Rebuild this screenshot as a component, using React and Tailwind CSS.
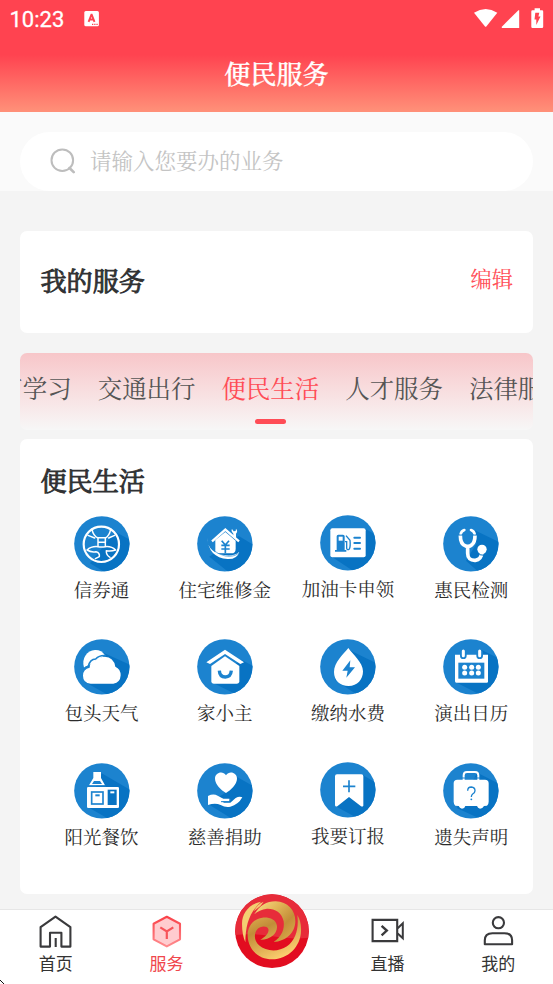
import React from "react";

const serif = "font-['Noto_Serif_CJK_SC','Noto_Serif_SC','Noto_Sans_CJK_SC',serif]";
const sans = "font-['Noto_Sans_CJK_SC',sans-serif]";

const BLUE = "#1c83cf";
const DARK = "#0873c3";

// Round service badge; x/y is the top-left corner of the artwork's drawing space.
function Badge({ id, x, y, shade, children }) {
  return (
    <svg className="block h-14 w-14" viewBox={`${x} ${y} 168 168`} fill="none">
      <defs>
        <clipPath id={id}>
          <circle cx={x + 83.5} cy={y + 83.5} r="83" />
        </clipPath>
      </defs>
      <circle cx={x + 83.5} cy={y + 83.5} r="83" fill={BLUE} />
      <path d={shade} fill={DARK} clipPath={`url(#${id})`} />
      {children}
    </svg>
  );
}

const Voucher = () => (
  <Badge id="b1" x={222} y={228} shade="M345 275L400 305V400H320L270 370Z">
    <circle cx="304" cy="313" r="53" stroke="#fff" strokeWidth="6.5" />
    <g stroke="#fff" strokeWidth="4.5" strokeLinecap="round" strokeLinejoin="round">
      <path d="M276 268Q280 288 294 294V318M332 268Q328 288 316 294V318M294 293H316M294 307H316M264 286L284 294M344 286L326 294" />
      <path d="M261 330Q274 318 294 320Q304 322 316 320Q334 318 347 330Q334 334 319 332Q318 346 330 352M261 330Q274 338 288 335Q300 338 298 350L286 356" />
    </g>
  </Badge>
);

const Repair = () => (
  <Badge id="b2" x={591} y={228} shade="M716 288L770 320V400H690L628 350Z">
    <path d="M646 300L676 276L707 302V326Q707 340 694 340H646Z" fill="#fff" />
    <path d="M636 304L676 269L717 304" stroke="#fff" strokeWidth="7" />
    <path d="M700 289V281Q692 273 696 267L701 274L707 273L708 266Q715 273 708 281V295" fill="#fff" />
    <path d="M622 293Q622 340 680 346Q705 348 718 335Q712 358 683 357Q625 352 622 293Z" fill="#fff" />
    <path d="M627 306Q634 338 676 348Q700 352 716 340" stroke={BLUE} strokeWidth="1.8" />
    <path d="M665 302L676 315L687 302M664 316H689M664 327H689M676 314V340" stroke={BLUE} strokeWidth="5" />
  </Badge>
);

const FuelCard = () => (
  <Badge id="b3" x={121} y={226} shade="M254 266L300 292V400H230L154 350Z">
    <rect x="152" y="266" width="106" height="87" rx="6" fill="#fff" />
    <path d="M171 331V290Q171 285 176 285H190Q195 285 195 290V331H200V336H166V331Z" fill={BLUE} />
    <rect x="177" y="291" width="12" height="12" fill="#fff" />
    <path d="M196 306H201V326Q203 333 209 328Q213 320 211 302L199 288" stroke={BLUE} strokeWidth="4" />
    <path d="M224 294H241M224 310H241M224 327H241" stroke={BLUE} strokeWidth="6" strokeLinecap="round" />
  </Badge>
);

const Stethoscope = () => (
  <Badge id="b4" x={489} y={228} shade="M578 268L670 312V400H600L558 362L590 310Z">
    <path d="M541 286Q541 314 557 318Q568 322 576 314Q585 307 585 286M563 318V340Q563 362 586 361Q604 359 606 336" stroke="#fff" strokeWidth="11" />
    <path d="M542 282Q544 273 553 270M584 282Q582 273 573 270" stroke="#fff" strokeWidth="8" strokeLinecap="round" />
    <path d="M534 285H548M578 285H592" stroke={BLUE} strokeWidth="2.5" />
    <circle cx="606" cy="328" r="14" fill="#fff" />
    <path d="M598 344L614 346" stroke={DARK} strokeWidth="3" />
  </Badge>
);

const Weather = () => (
  <Badge id="b5" x={72} y={43} shade="M160 84L250 125V220H190L105 172Z">
    <path d="M102 129Q96 108 106 93Q117 77 135 76Q154 75 165 92Z" fill="#fff" />
    <path d="M122 177Q99 175 99 153Q99 133 119 129Q120 109 138 107Q148 96 164 96Q191 97 196 126Q212 133 212 152Q211 174 190 177Z" fill="#fff" />
    <path d="M101 134Q107 126 115 125Q120 103 137 103Q150 90 168 93" stroke={BLUE} strokeWidth="5" />
  </Badge>
);

const Home = () => (
  <Badge id="b6" x={441} y={43} shade="M574 105L620 130V215H570L484 172Z">
    <path d="M469 113L525 75L582 113L571 118L525 88L480 118Z" fill="#fff" />
    <path d="M484 124L525 95L568 124V170Q568 177 560 177H492Q484 177 484 170Z" fill="#fff" />
    <path d="M508 138Q509 157 526 157Q542 157 544 138" stroke={BLUE} strokeWidth="10" />
  </Badge>
);

const WaterDrop = () => (
  <Badge id="b7" x={60} y={42} shade="M148 75L240 120V215H180L105 165Z">
    <path d="M145 69C130 88 102 112 102 141C102 167 120 183 146 183C172 183 189 164 189 139C189 112 158 88 145 69Z" fill="#fff" />
    <path d="M151 106L127 137H143L139 158L165 127H149Z" fill={BLUE} />
  </Badge>
);

const Calendar = () => (
  <Badge id="b8" x={429} y={43} shade="M545 76L610 108V215H550L466 172Z">
    <path d="M465 90H564V171Q564 174 560 174H469Q465 174 465 170Z" fill="#fff" />
    <rect x="475" y="114" width="78" height="48" fill={BLUE} />
    <path d="M490 86V93M539 86V93" stroke={BLUE} strokeWidth="20" strokeLinecap="round" />
    <path d="M490 79V93M539 79V93" stroke="#fff" strokeWidth="9" strokeLinecap="round" />
    {[494, 515, 535].map((cx) => (
      <g key={cx} fill="#fff">
        <circle cx={cx} cy="128" r="7.5" />
        <circle cx={cx} cy="145" r="7.5" />
      </g>
    ))}
  </Badge>
);

const Dining = () => (
  <Badge id="b9" x={72} y={39} shade="M155 70L250 125V215H190L112 170Z">
    <path d="M130 66H153V84L165 106H117L130 84Z" fill="#fff" />
    <path d="M126 102L132 93H150L156 102Z" fill={BLUE} />
    <rect x="111" y="111" width="96" height="63" rx="4" fill="#fff" />
    <path d="M109 108H168" stroke={BLUE} strokeWidth="3" />
    <rect x="125" y="126" width="34" height="36" stroke={BLUE} strokeWidth="5" />
    <rect x="173" y="119" width="27" height="46" fill={DARK} />
    <path d="M136 136H149" stroke={BLUE} strokeWidth="6" />
    <path d="M181 127H193" stroke="#fff" strokeWidth="6" />
  </Badge>
);

const Charity = () => (
  <Badge id="b10" x={441} y={39} shade="M556 78L620 114V215H560L474 162L530 126Z">
    <path d="M528 129C514 120 495 103 495 86C495 68 518 61 528 76C538 61 561 68 561 86C561 103 542 120 528 129Z" fill="#fff" />
    <path d="M474 138Q490 130 503 137L520 146H538Q544 150 537 154H516L522 158H541L557 144Q568 138 577 142Q565 164 541 170Q526 173 512 165Q496 158 474 165Z" fill="#fff" />
    <path d="M513 155H535Q543 152 539 146" stroke={BLUE} strokeWidth="3" />
  </Badge>
);

const Subscribe = () => (
  <Badge id="b11" x={60} y={37} shade="M188 76L240 106V215H190L107 170L147 135L188 165Z">
    <path d="M105 80Q105 74 111 74H184Q190 74 190 80V168Q188 172 183 170L147 142L112 170Q106 172 105 167Z" fill="#fff" />
    <path d="M147 92V128M129 110H166" stroke={BLUE} strokeWidth="5" />
  </Badge>
);

const LostItem = () => (
  <Badge id="b12" x={429} y={39} shade="M532 68L610 108V215H560L470 174Z">
    <path d="M491 91V76Q491 66 501 66H525Q535 66 535 76V91" stroke="#fff" strokeWidth="6" />
    <path d="M485 84H541" stroke={BLUE} strokeWidth="3" />
    <path d="M461 100Q461 89 472 89H555Q566 89 566 100V155Q566 163 561 167L552 168Q548 176 540 176Q533 175 531 168H496Q494 176 486 176Q479 175 476 168L466 167Q461 163 461 155Z" fill="#fff" />
    <path d="M503 122Q503 111 514 111Q525 112 525 122Q525 128 518 132Q514 135 514 141" stroke={BLUE} strokeWidth="4" />
    <circle cx="514" cy="148" r="2.8" fill={BLUE} />
  </Badge>
);

const services = [
  ["信券通", Voucher],
  ["住宅维修金", Repair],
  ["加油卡申领", FuelCard],
  ["惠民检测", Stethoscope],
  ["包头天气", Weather],
  ["家小主", Home],
  ["缴纳水费", WaterDrop],
  ["演出日历", Calendar],
  ["阳光餐饮", Dining],
  ["慈善捐助", Charity],
  ["我要订报", Subscribe],
  ["遗失声明", LostItem],
];

const tabs = ["教育学习", "交通出行", "便民生活", "人才服务", "法律服务"];

function StatusBar() {
  return (
    <div className="flex h-[37px] items-center justify-between pl-[9.5px] pr-[9px]">
      <div className="flex items-center gap-[20px]">
        <span className="mt-px font-['Roboto',sans-serif] text-[22px] font-normal leading-[37px] text-white [-webkit-text-stroke:0.3px]">10:23</span>
        <svg className="block h-4 w-4" viewBox="0 0 16 16">
          <rect x="0.3" y="0" width="14.6" height="15.2" rx="1.5" fill="#fff" />
          <path d="M4.6 10.8L7.4 3.6H7.7L10.5 10.8M5.6 8.5H9.5" stroke="#ff4350" strokeWidth="1.9" fill="none" />
          <path d="M8 13.3H9.3M10.2 13.3H11.5M12.4 13.3H13.7" stroke="#ff4350" strokeWidth="1.2" />
        </svg>
      </div>
      <svg className="-mt-px block h-5 w-[70px]" viewBox="0 0 70 20">
        <g fill="#fff">
          <path d="M0 4.8Q11.7 -2.6 23.3 4.8L12.3 18.4Q11.7 19.1 11 18.4Z" />
          <path d="M27.8 20V18.7L44.4 2.2H45.2V20Z" />
          <path d="M57.3 3.5Q57.3 2.3 58.5 2.3H60.6V0.3H66V2.3H68Q69.2 2.3 69.2 3.5V18.8Q69.2 20 68 20H58.5Q57.3 20 57.3 18.8Z" />
        </g>
        <path d="M61.3 4.7H65.3L64.4 8.5H66.5L62.3 17V11.5H60.5Z" fill="#ff4350" />
      </svg>
    </div>
  );
}

function Emblem() {
  return (
    <svg className="block h-[76px] w-[76px]" viewBox="7 8 228 228">
      <defs>
        <linearGradient id="gold" x1="0" y1="0" x2="1" y2="1">
          <stop offset="0" stopColor="#fbe08a" />
          <stop offset="0.35" stopColor="#e2b457" />
          <stop offset="0.65" stopColor="#c38e38" />
          <stop offset="1" stopColor="#e0b052" />
        </linearGradient>
        <linearGradient id="gold2" x1="0" y1="0" x2="0.6" y2="1">
          <stop offset="0" stopColor="#e0b052" />
          <stop offset="0.35" stopColor="#c18c38" />
          <stop offset="1" stopColor="#fdd070" />
        </linearGradient>
        <clipPath id="emblemClip">
          <circle cx="121" cy="122.5" r="110.5" />
        </clipPath>
      </defs>
      <circle cx="121" cy="122.5" r="110.5" fill="#e20d20" />
      <path d="M9 10H233V142Q180 148 121 138Q64 128 9 134Z" fill="#e72c3a" clipPath="url(#emblemClip)" />
      <path d="M88 34C50 42 31 70 31 100C31 124 35 141 41 156C42 104 52 68 88 34Z" fill="#f3cf72" />
      <path d="M68 72C84 46 104 33 132 33C168 34 191 60 191 92C191 128 162 153 126 155C151 139 159 116 156 93C151 66 128 54 106 55C90 57 78 63 68 72Z" fill="url(#gold)" />
      <path d="M67 62C73 49 83 38 96 34L86 47Z" fill="#f3cf72" />
      <path d="M86 148C114 149 138 130 136 107C133 86 112 80 92 82C64 86 47 110 48 137C50 179 82 207 121 207C170 207 207 168 208 122C209 102 205 86 197 74C202 116 192 148 166 168C140 186 103 184 82 165C67 151 66 130 77 117C86 107 105 105 110 116C113 127 102 139 86 148Z" fill="url(#gold2)" />
    </svg>
  );
}

const stroke = "#3a3a3c";

const navItems = [
  {
    label: "首页",
    icon: (
      <svg className="block h-9 w-9" viewBox="0 0 36 36" fill="none" stroke={stroke} strokeWidth="2.1" strokeLinejoin="round">
        <path d="M3.6 14.2L18.5 3.6L33.4 14.2V33.6H24.4V19.7H13V33.6H3.6Z" />
        <path d="M18.7 25V34" />
      </svg>
    ),
  },
  {
    label: "服务",
    active: true,
    icon: (
      <svg className="block h-9 w-9" viewBox="0 0 36 36" fill="none">
        <defs>
          <linearGradient id="hex" x1="0" y1="0" x2="0" y2="1">
            <stop offset="0" stopColor="#fa4249" />
            <stop offset="1" stopColor="#ff8b8e" />
          </linearGradient>
        </defs>
        <path d="M18.8 3.8L32 10.8V26.3L18.8 33.4L5.6 26.3V10.8Z" fill="#ffcccf" stroke="url(#hex)" strokeWidth="2.1" strokeLinejoin="round" />
        <path d="M12.3 14.3L18.8 18.5L25.3 14.3M18.8 18.5V26" stroke="#f7545a" strokeWidth="2.2" />
      </svg>
    ),
  },
  { label: null },
  {
    label: "直播",
    icon: (
      <svg className="block h-9 w-9" viewBox="0 0 36 36" fill="none" stroke={stroke} strokeWidth="2.1">
        <path d="M3.6 6.9H28.2V28.1H3.6Z" />
        <path d="M12.6 12.8L17.8 17.6L12.6 22.3" strokeWidth="2.4" />
        <path d="M28.7 15.3L33.8 10.3V25.3L28.7 20.6" strokeWidth="2" />
      </svg>
    ),
  },
  {
    label: "我的",
    icon: (
      <svg className="block h-9 w-9" viewBox="0 0 36 36" fill="none" stroke={stroke} strokeWidth="2.1">
        <circle cx="18.4" cy="9.7" r="5.6" />
        <path d="M4.8 31.3V27.3Q4.8 20.2 12.4 20.2H24.4Q32.1 20.2 32.1 27.3V31.3Z" strokeLinejoin="round" />
      </svg>
    ),
  },
];

export default function App() {
  return (
    <div className={`relative flex h-[984px] w-[553px] flex-col overflow-hidden bg-[#f4f4f4] ${serif}`}>
      <header className="h-28 shrink-0 bg-[linear-gradient(180deg,#ff4350_0%,#ff4350_49%,#ff9179_100%)]">
        <StatusBar />
        <h1 className="text-center text-[26.1px] font-medium leading-[72px] text-white [-webkit-text-stroke:0.3px]">便民服务</h1>
      </header>

      <div className="h-[79px] shrink-0 bg-[#fafafa] px-5 pt-5">
        <div className="flex h-[59px] items-center rounded-full bg-white pl-[30px]">
          <svg className="-mt-[2px] block h-[26px] w-[26px]" viewBox="0 0 26 26" fill="none" stroke="#bdbdbd" strokeWidth="2">
            <circle cx="12.3" cy="12.2" r="10.8" />
            <path d="M19.5 20L23.7 24.2" strokeWidth="2.6" strokeLinecap="round" />
          </svg>
          <span className="-mt-1 pl-[14px] text-[21.5px] leading-8 text-[#c4c4c4]">请输入您要办的业务</span>
        </div>
      </div>

      <section className="mx-5 mt-10 flex h-[102px] shrink-0 items-center justify-between rounded-[7px] bg-white px-5">
        <h2 className="pb-1 pl-[0.5px] text-[26.1px] font-normal leading-10 text-[#303133] [-webkit-text-stroke:0.9px]">我的服务</h2>
        <span className="pb-2 text-[21.3px] leading-8 text-[#ff4c56]">编辑</span>
      </section>

      <nav className="mx-5 mt-5 h-[77px] shrink-0 overflow-hidden rounded-[7px] bg-gradient-to-b from-[#f7c6c9] to-[#f7f7f7]">
        <div className="-ml-[46px] flex w-max gap-[26px] pt-[17px]">
          {tabs.map((tab) => {
            const active = tab === "便民生活";
            return (
              <div key={tab} className="flex flex-col items-center">
                <span className={`whitespace-nowrap text-[24.45px] leading-9 ${active ? "text-[#ff4c56]" : "text-[#555]"}`}>{tab}</span>
                {active && <span className="mt-[13px] h-[5px] w-[31px] rounded-full bg-[#ff4c56]" />}
              </div>
            );
          })}
        </div>
      </nav>

      <section className="mx-5 mt-[9px] h-[455px] shrink-0 rounded-[7px] bg-white pl-5">
        <h2 className="pl-[0.5px] pt-[21px] text-[26.1px] font-normal leading-10 text-[#303133] [-webkit-text-stroke:0.9px]">便民生活</h2>
        <div className="mt-[15.6px] grid grid-cols-4">
          {services.map(([label, Icon], i) => (
            <div key={label} className={`flex h-[123.6px] flex-col items-center ${i % 4 === 2 ? "-mt-[0.4px]" : ""}`}>
              <Icon />
              <span className="mt-[3px] whitespace-nowrap text-[18.5px] leading-7 text-[#2c2c2c]">{label}</span>
            </div>
          ))}
        </div>
      </section>

      <footer className="mt-[15px] grid h-[75px] shrink-0 grid-cols-5 border-t border-[#e6e6e6] bg-white">
        {navItems.map(({ label, icon, active }, i) =>
          label ? (
            <div key={i} className="flex flex-col items-center pt-[3px]">
              {icon}
              <span className={`mt-[2px] pl-px text-[17px] leading-6 ${sans} ${active ? "text-[#f0474d]" : "text-[#333]"}`}>{label}</span>
            </div>
          ) : (
            <div key={i} className="-mt-[17px] flex justify-center pr-[8px]">
              <Emblem />
            </div>
          )
        )}
      </footer>

      <svg className="absolute bottom-0 left-0 h-1 w-1" viewBox="0 0 4 4" fill="#111">
        <path d="M0 0H1V1H0ZM1 1H2V2H1ZM2 2H3V3H2ZM3 3H4V4H3Z" />
      </svg>
    </div>
  );
}
